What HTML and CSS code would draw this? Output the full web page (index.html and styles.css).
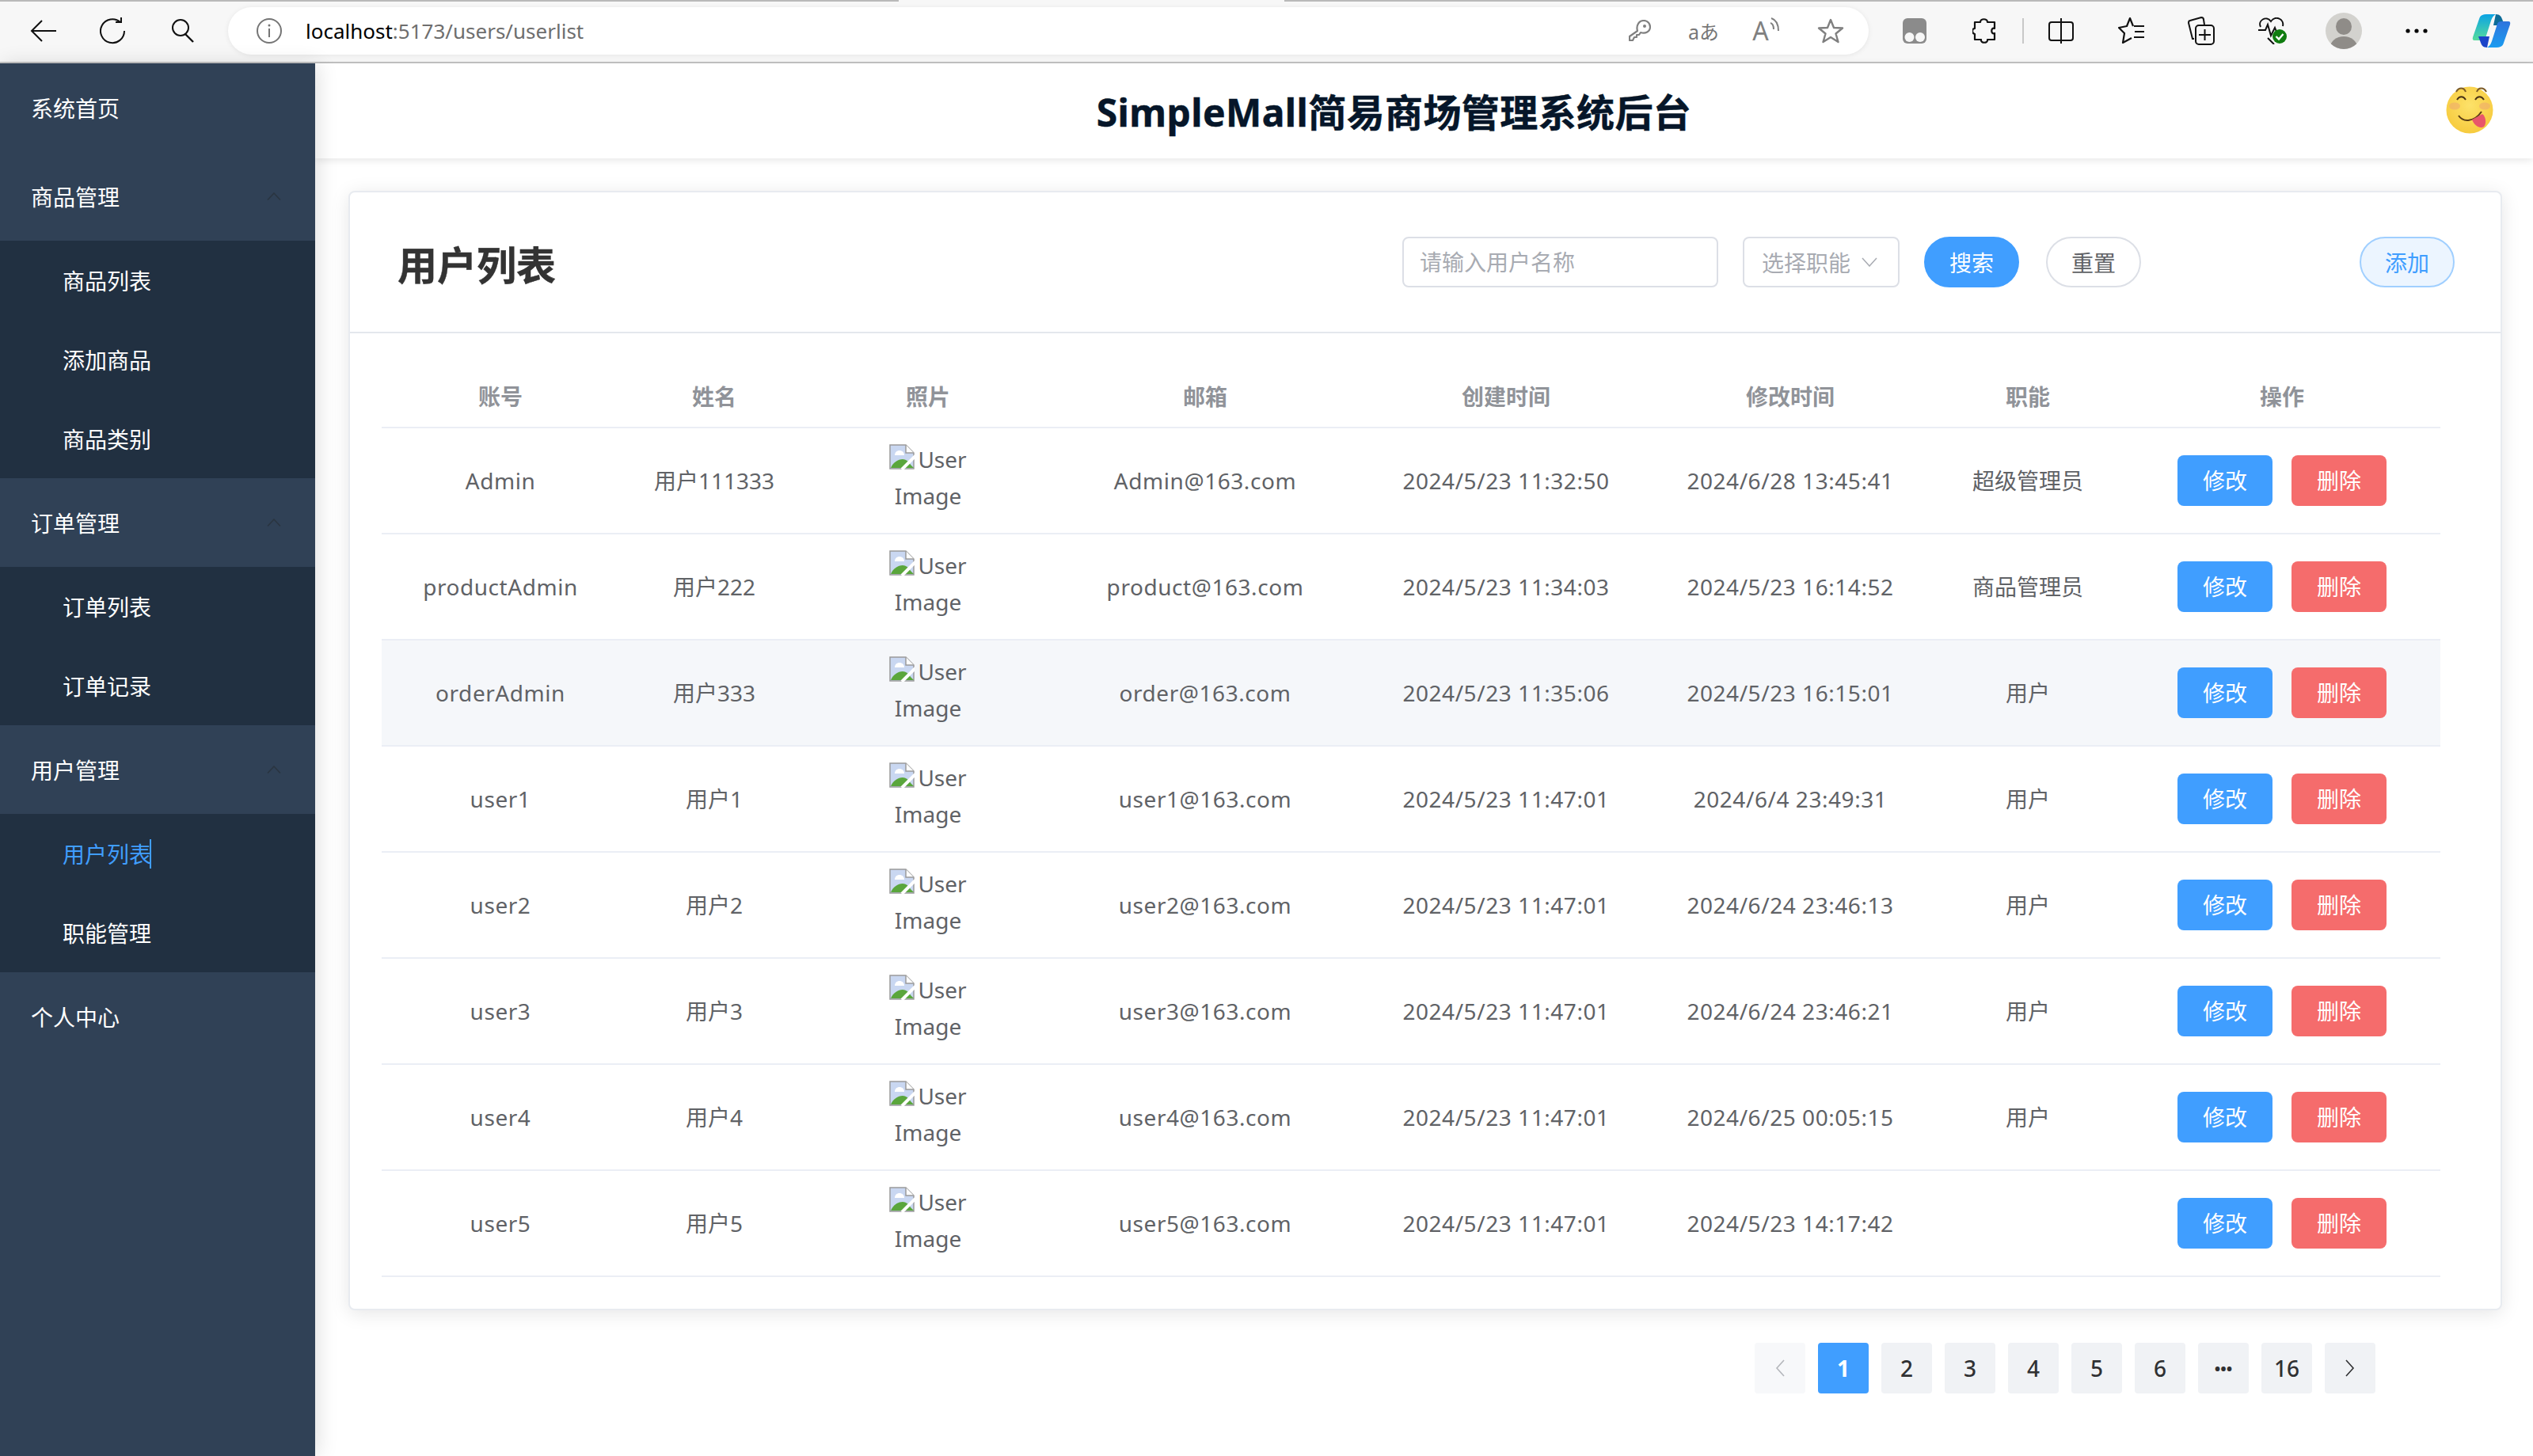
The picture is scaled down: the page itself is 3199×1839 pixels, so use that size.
FILE: index.html
```html
<!DOCTYPE html>
<html lang="zh-CN">
<head>
    <meta charset="UTF-8">
    <title>SimpleMall简易商场管理系统后台</title>
    <link rel="stylesheet" href="styles.css">
</head>
<body>

<svg class="defs" width="0" height="0">
    <symbol id="broken" viewBox="0 0 32 32">
        <path d="M1 1H21L31 11V31H1Z" fill="#c9d7f1" stroke="#9a9a9a" stroke-width="1.5"/>
        <path d="M21 1V11H31" fill="#fff" stroke="#9a9a9a" stroke-width="1.5"/>
        <path d="M7 14C7 10 10 8 13 8C16 8 19 10 19 14Z" fill="#fff"/>
        <path d="M2 30C5 23 11 19 17 19C21 19 25 22 27 26L31 30Z" fill="#5aa63c"/>
        <path d="M16 32L33 15" stroke="#fff" stroke-width="4"/>
    </symbol>
    <symbol id="up" viewBox="0 0 18 10">
        <path d="M1 9.5L9 1L17 9.5" fill="none" stroke="#2a3541" stroke-width="1.6"/>
    </symbol>
</svg>

<div class="topbar">
    <div class="nav-btns">
        <span class="slot"><svg width="34" height="30" viewBox="0 0 34 30"><path d="M33 15H2M15 2L2 15L15 28" fill="none" stroke="#111" stroke-width="2"/></svg></span>
        <span class="slot"><svg width="34" height="34" viewBox="0 0 34 34"><path d="M26 6A15 15 0 1 0 31 17" fill="none" stroke="#111" stroke-width="2"/><path d="M20 6H27V0" fill="none" stroke="#111" stroke-width="2"/></svg></span>
        <span class="slot"><svg width="32" height="30" viewBox="0 0 32 30"><circle cx="13" cy="11" r="10" fill="none" stroke="#111" stroke-width="2"/><path d="M19 19L29 29" stroke="#111" stroke-width="2.4"/></svg></span>
    </div>
    <div class="address">
        <svg class="info" width="32" height="32" viewBox="0 0 32 32"><circle cx="16" cy="16" r="15" fill="none" stroke="#757575" stroke-width="2"/><path d="M16 13V24" stroke="#757575" stroke-width="2"/><circle cx="16" cy="9" r="1.5" fill="#757575"/></svg>
        <span class="url">localhost<span class="url-path">:5173/users/userlist</span></span>
        <div class="addr-tools">
            <svg width="28" height="28" viewBox="0 0 28 28"><path d="M11 14C9 7 13 1 19 1C24 1 27 5 27 9C27 15 21 18 15 16L13 19H10V22H7L5 26H1V21Z" fill="none" stroke="#808080" stroke-width="2.2" stroke-linejoin="round"/><circle cx="20" cy="8" r="2" fill="#808080"/></svg>
            <span class="translate">aあ</span>
            <span class="read-aloud">A<svg width="14" height="22" viewBox="0 0 14 22"><path d="M2 9C5 10 6 13 6 17M3 3C9 5 12 10 12 19" fill="none" stroke="#808080" stroke-width="2"/></svg></span>
            <svg width="34" height="34" viewBox="0 0 34 34"><path d="M17 3L21 13L32 13.500L23.500 20.500L26.500 31L17 25L7.500 31L10.500 20.500L2 13.500L13 13Z" fill="none" stroke="#808080" stroke-width="2.400" stroke-linejoin="round"/></svg>
        </div>
    </div>
    <div class="tools">
        <svg width="30" height="32" viewBox="0 0 30 32"><rect width="30" height="32" rx="6" fill="#8b8b8b"/><circle cx="8.500" cy="24" r="6" fill="#f7f7f7"/><circle cx="22" cy="24" r="6" fill="#f7f7f7"/></svg>
        <svg width="30" height="34" viewBox="0 0 30 34"><path d="M10 6C10 1 19 1 19 6H28V14C23 12 23 22 28 20V28H19C20 33 10 33 11 28H3V21C-1 20 -1 14 3 14V6Z" fill="none" stroke="#111" stroke-width="2.200" stroke-linejoin="round"/></svg>
        <span class="tool-div"></span>
        <svg width="32" height="32" viewBox="0 0 32 32"><rect x="1" y="5" width="30" height="23" rx="3" fill="none" stroke="#111" stroke-width="2"/><path d="M16 0V32" stroke="#111" stroke-width="2"/></svg>
        <svg width="34" height="34" viewBox="0 0 34 34"><path d="M19 11L15 1L11 11L1 13L8 20L6 32L17 26" fill="none" stroke="#111" stroke-width="2.200" stroke-linejoin="round"/><path d="M20 11H33M21 18H33M20 25H33" stroke="#111" stroke-width="2.200"/></svg>
        <svg width="34" height="36" viewBox="0 0 34 36"><path d="M8 28H6L1 8C1 6 2 5 3 5L17 1C19 1 20 2 20 4L21 10" fill="none" stroke="#111" stroke-width="2"/><rect x="10" y="11" width="23" height="24" rx="4" fill="#f7f7f7" stroke="#111" stroke-width="2"/><path d="M21.500 16V30M14 23H29" stroke="#111" stroke-width="2"/></svg>
        <svg width="36" height="34" viewBox="0 0 36 34"><path d="M3 12C-1 4 10 -3 16 5C22 -3 33 2 31 11M12 26L20 34" fill="none" stroke="#111" stroke-width="2"/><path d="M0 16H9L12 9L16 23L21 13L23 18" fill="none" stroke="#111" stroke-width="2"/><circle cx="27" cy="24" r="9" fill="#107c10"/><path d="M22.500 24L26 27.500L31.500 21" fill="none" stroke="#fff" stroke-width="2.400"/></svg>
        <svg width="46" height="46" viewBox="0 0 46 46"><defs><clipPath id="pic"><circle cx="23" cy="23" r="23"/></clipPath></defs><circle cx="23" cy="23" r="23" fill="#d3d2ce"/><ellipse cx="23" cy="17.500" rx="10" ry="10.500" fill="#8f8c88"/><ellipse cx="23" cy="44" rx="17" ry="14" fill="#8f8c88" clip-path="url(#pic)"/></svg>
        <svg width="28" height="6" viewBox="0 0 28 6"><circle cx="3" cy="3" r="2.600"/><circle cx="14" cy="3" r="2.600"/><circle cx="25" cy="3" r="2.600"/></svg>
        <svg width="49" height="42" viewBox="0 0 49 42">
            <defs>
                <linearGradient id="cp1" x1="0" y1="0" x2="0" y2="1"><stop offset="0" stop-color="#0ba3e4"/><stop offset="1" stop-color="#56dd9c"/></linearGradient>
                <linearGradient id="cp2" x1="0" y1="0" x2="0" y2="1"><stop offset="0" stop-color="#1a9cf0"/><stop offset="1" stop-color="#2f74dd"/></linearGradient>
            </defs>
            <path d="M30 0C35 0 37 3 38 6L41 14H27Z" fill="#0d6c98"/>
            <path d="M13 1Q15 0 18 0H30Q26 2 24 8L17 30Q16 33 12 33H3Q0 33 1 29L9 6Q10 2 13 1Z" fill="url(#cp1)"/>
            <g transform="rotate(180 24.500 21)">
                <path d="M30 0C35 0 37 3 38 6L41 14H27Z" fill="#1b44c9"/>
                <path d="M13 1Q15 0 18 0H30Q26 2 24 8L17 30Q16 33 12 33H3Q0 33 1 29L9 6Q10 2 13 1Z" fill="url(#cp2)"/>
            </g>
        </svg>
    </div>
</div>

<div class="app">
    <aside class="sidebar">
        <div class="menu-item">系统首页</div>
        <div class="menu-item">商品管理<svg class="arrow" width="18" height="10"><use href="#up"/></svg></div>
        <div class="submenu">
            <div class="sub-item">商品列表</div>
            <div class="sub-item">添加商品</div>
            <div class="sub-item">商品类别</div>
        </div>
        <div class="menu-item">订单管理<svg class="arrow" width="18" height="10"><use href="#up"/></svg></div>
        <div class="submenu">
            <div class="sub-item">订单列表</div>
            <div class="sub-item">订单记录</div>
        </div>
        <div class="menu-item">用户管理<svg class="arrow" width="18" height="10"><use href="#up"/></svg></div>
        <div class="submenu">
            <div class="sub-item active">用户列表<span class="caret"></span></div>
            <div class="sub-item">职能管理</div>
        </div>
        <div class="menu-item">个人中心</div>
    </aside>

    <main class="main">
        <header class="header">
            <h1 class="site-title">SimpleMall简易商场管理系统后台</h1>
            <svg class="avatar" width="60" height="60" viewBox="0 0 60 60">
                <defs>
                    <radialGradient id="face" cx="0.5" cy="0.4" r="0.65"><stop offset="0" stop-color="#fde26a"/><stop offset="1" stop-color="#f6c93b"/></radialGradient>
                </defs>
                <circle cx="30" cy="30" r="29.500" fill="url(#face)"/>
                <ellipse cx="11" cy="25" rx="7" ry="4.500" fill="#efb06a" opacity="0.7"/>
                <ellipse cx="49" cy="25" rx="7" ry="4.500" fill="#efb06a" opacity="0.7"/>
                <path d="M13 7C16 1 23 1 25 7M39 7C41 1 48 1 51 7" fill="none" stroke="#7b5a26" stroke-width="2"/>
                <path d="M14 17C17 12 22 12 25 17M37 17C40 12 45 12 48 17" fill="none" stroke="#4a3315" stroke-width="2"/>
                <path d="M16 37C22 46 36 45 45 32" fill="none" stroke="#5a3d14" stroke-width="2"/>
                <path d="M33 42L46 35C50 38 52 46 48 51C43 54 36 50 33 42Z" fill="#e8566a"/>
            </svg>
        </header>

        <section class="card">
            <div class="card-head">
                <h2 class="card-title">用户列表</h2>
                <div class="filters">
                    <input class="field name-input" type="text" placeholder="请输入用户名称">
                    <div class="field role-select">选择职能<svg width="20" height="12" viewBox="0 0 20 12"><path d="M1 1L10 11L19 1" fill="none" stroke="#a8abb2" stroke-width="1.500"/></svg></div>
                    <button type="button" class="pill pill-primary">搜索</button>
                    <button type="button" class="pill pill-plain">重置</button>
                </div>
                <button type="button" class="pill pill-light">添加</button>
            </div>

            <div class="card-body">
                <table class="user-table">
                    <colgroup>
                        <col class="c-account"><col class="c-name"><col class="c-photo"><col class="c-mail"><col class="c-created"><col class="c-updated"><col class="c-role"><col class="c-ops">
                    </colgroup>
                    <thead>
                        <tr><th>账号</th><th>姓名</th><th>照片</th><th>邮箱</th><th>创建时间</th><th>修改时间</th><th>职能</th><th>操作</th></tr>
                    </thead>
                    <tbody>
                        <tr>
                            <td>Admin</td><td>用户111333</td>
                            <td><div class="photo"><svg width="32" height="32"><use href="#broken"/></svg>User Image</div></td>
                            <td>Admin@163.com</td><td>2024/5/23 11:32:50</td><td>2024/6/28 13:45:41</td><td>超级管理员</td>
                            <td><div class="ops"><button type="button" class="btn btn-edit">修改</button><button type="button" class="btn btn-del">删除</button></div></td>
                        </tr>
                        <tr>
                            <td>productAdmin</td><td>用户222</td>
                            <td><div class="photo"><svg width="32" height="32"><use href="#broken"/></svg>User Image</div></td>
                            <td>product@163.com</td><td>2024/5/23 11:34:03</td><td>2024/5/23 16:14:52</td><td>商品管理员</td>
                            <td><div class="ops"><button type="button" class="btn btn-edit">修改</button><button type="button" class="btn btn-del">删除</button></div></td>
                        </tr>
                        <tr class="hover">
                            <td>orderAdmin</td><td>用户333</td>
                            <td><div class="photo"><svg width="32" height="32"><use href="#broken"/></svg>User Image</div></td>
                            <td>order@163.com</td><td>2024/5/23 11:35:06</td><td>2024/5/23 16:15:01</td><td>用户</td>
                            <td><div class="ops"><button type="button" class="btn btn-edit">修改</button><button type="button" class="btn btn-del">删除</button></div></td>
                        </tr>
                        <tr>
                            <td>user1</td><td>用户1</td>
                            <td><div class="photo"><svg width="32" height="32"><use href="#broken"/></svg>User Image</div></td>
                            <td>user1@163.com</td><td>2024/5/23 11:47:01</td><td>2024/6/4 23:49:31</td><td>用户</td>
                            <td><div class="ops"><button type="button" class="btn btn-edit">修改</button><button type="button" class="btn btn-del">删除</button></div></td>
                        </tr>
                        <tr>
                            <td>user2</td><td>用户2</td>
                            <td><div class="photo"><svg width="32" height="32"><use href="#broken"/></svg>User Image</div></td>
                            <td>user2@163.com</td><td>2024/5/23 11:47:01</td><td>2024/6/24 23:46:13</td><td>用户</td>
                            <td><div class="ops"><button type="button" class="btn btn-edit">修改</button><button type="button" class="btn btn-del">删除</button></div></td>
                        </tr>
                        <tr>
                            <td>user3</td><td>用户3</td>
                            <td><div class="photo"><svg width="32" height="32"><use href="#broken"/></svg>User Image</div></td>
                            <td>user3@163.com</td><td>2024/5/23 11:47:01</td><td>2024/6/24 23:46:21</td><td>用户</td>
                            <td><div class="ops"><button type="button" class="btn btn-edit">修改</button><button type="button" class="btn btn-del">删除</button></div></td>
                        </tr>
                        <tr>
                            <td>user4</td><td>用户4</td>
                            <td><div class="photo"><svg width="32" height="32"><use href="#broken"/></svg>User Image</div></td>
                            <td>user4@163.com</td><td>2024/5/23 11:47:01</td><td>2024/6/25 00:05:15</td><td>用户</td>
                            <td><div class="ops"><button type="button" class="btn btn-edit">修改</button><button type="button" class="btn btn-del">删除</button></div></td>
                        </tr>
                        <tr>
                            <td>user5</td><td>用户5</td>
                            <td><div class="photo"><svg width="32" height="32"><use href="#broken"/></svg>User Image</div></td>
                            <td>user5@163.com</td><td>2024/5/23 11:47:01</td><td>2024/5/23 14:17:42</td><td></td>
                            <td><div class="ops"><button type="button" class="btn btn-edit">修改</button><button type="button" class="btn btn-del">删除</button></div></td>
                        </tr>
                    </tbody>
                </table>
            </div>
        </section>

        <div class="pager">
            <span class="page disabled"><svg width="12" height="22" viewBox="0 0 12 22"><path d="M11 1L2 11L11 21" fill="none" stroke="#b4b6bb" stroke-width="1.600"/></svg></span>
            <span class="page current">1</span>
            <span class="page">2</span>
            <span class="page">3</span>
            <span class="page">4</span>
            <span class="page">5</span>
            <span class="page">6</span>
            <span class="page dots">•••</span>
            <span class="page">16</span>
            <span class="page"><svg width="12" height="22" viewBox="0 0 12 22"><path d="M1 1L10 11L1 21" fill="none" stroke="#303133" stroke-width="1.600"/></svg></span>
        </div>
    </main>
</div>

</body>
</html>
```

FILE: styles.css
```css
* {
    box-sizing: border-box;
}

html, body {
    margin: 0;
    height: 100%;
}

body {
    width: 3199px;
    height: 1839px;
    overflow: hidden;
    background-color: #fff;
    font-family: "Noto Sans", "Noto Sans CJK SC", sans-serif;
    font-size: 28px;
    color: #606266;
}

.defs {
    display: block;
    height: 0;
}

/* browser chrome */
.topbar {
    display: flex;
    align-items: center;
    height: 80px;
    padding-bottom: 0;
    border-bottom: 2px solid #c4c4c4;
    background: linear-gradient(to right, #b9b9b9 1135px, #f7f7f7 1135px, #f7f7f7 1622px, #b9b9b9 1622px) 0 0 / 100% 2px no-repeat, #f7f7f7;
}

.nav-btns {
    display: flex;
    width: 288px;
    padding-left: 11px;
}

.slot {
    display: flex;
    justify-content: center;
    align-items: center;
    width: 88px;
}

.address {
    display: flex;
    align-items: center;
    width: 2072px;
    height: 60px;
    padding-left: 36px;
    padding-right: 6px;
    border-radius: 30px;
    background-color: #fff;
    box-shadow: 0 1px 6px rgba(0, 0, 0, 0.08);
}

.url {
    margin-left: 30px;
    font-size: 26px;
    color: #000;
}

.url-path {
    color: #6e6e6e;
}

.addr-tools {
    display: grid;
    grid-template-columns: 83px 79px 79px 84px;
    justify-items: center;
    align-items: center;
    margin-left: auto;
}

.translate {
    font-size: 25px;
    color: #777;
}

.read-aloud {
    display: flex;
    font-size: 32px;
    line-height: 38px;
    color: #808080;
}

.tools {
    display: grid;
    grid-template-columns: 80px 96px 2px 94px 84px 92px 88px 92px 92px 96px;
    justify-items: center;
    align-items: center;
    margin-left: 18px;
}

.tool-div {
    width: 2px;
    height: 32px;
    background-color: #c8c8c8;
}

/* layout */
.app {
    display: flex;
    height: 1759px;
}

.sidebar {
    position: relative;
    z-index: 2;
    flex: none;
    width: 398px;
    background-color: #304156;
    box-shadow: 4px 0 24px rgba(0, 0, 0, 0.12);
    color: #fff;
}

.menu-item {
    display: flex;
    align-items: center;
    justify-content: space-between;
    height: 112px;
    padding: 0 43px 0 39px;
}

.submenu {
    background-color: #213041;
}

.sub-item {
    display: flex;
    align-items: center;
    height: 100px;
    padding-left: 79px;
}

.sub-item.active {
    color: #409eff;
}

.caret {
    width: 2px;
    height: 37px;
    margin-left: -2px;
    background-color: #409eff;
}

.main {
    flex: 1;
    min-width: 0;
}

.header {
    display: flex;
    align-items: center;
    height: 120px;
    padding: 0 50px 2px 0;
    box-shadow: 0 2px 10px rgba(0, 0, 0, 0.1);
}

.site-title {
    flex: 1;
    margin: 0;
    padding-left: 34px;
    text-align: center;
    font-size: 48px;
    font-weight: 700;
    letter-spacing: 0.4px;
    -webkit-text-stroke: 0.5px #061629;
    color: #061629;
}

.avatar {
    flex: none;
}

/* card */
.card {
    margin: 41px 39px 0 42px;
    border: 2px solid #e8ebf0;
    border-radius: 8px;
    background-color: #fff;
    box-shadow: 0 4px 24px rgba(0, 0, 0, 0.1);
}

.card-head {
    display: flex;
    align-items: center;
    height: 178px;
    padding: 0 58px 0 60px;
    border-bottom: 2px solid #e4e7ed;
}

.card-title {
    margin: 2px 0 0;
    font-size: 50px;
    font-weight: 700;
    -webkit-text-stroke: 0.4px #333;
    color: #333;
}

.filters {
    display: flex;
    align-items: center;
    margin-left: auto;
    margin-right: 276px;
}

.field {
    height: 64px;
    border: 2px solid #dcdfe6;
    border-radius: 8px;
    background-color: #fff;
    font: inherit;
    color: #a8abb2;
}

.name-input {
    width: 399px;
    padding: 0 20px;
    outline: none;
}

.name-input::placeholder {
    color: #a8abb2;
}

.role-select {
    display: flex;
    align-items: center;
    justify-content: space-between;
    width: 198px;
    margin-left: 31px;
    padding: 0 26px 0 22px;
}

.pill {
    width: 120px;
    height: 64px;
    padding: 0;
    border: 2px solid #dcdfe6;
    border-radius: 32px;
    background-color: #fff;
    font: inherit;
}

.pill-primary {
    margin-left: 31px;
    border-color: #409eff;
    background-color: #409eff;
    color: #fff;
}

.pill-plain {
    margin-left: 34px;
    color: #606266;
}

.pill-light {
    border-color: #a0cfff;
    background-color: #ecf5ff;
    color: #409eff;
}

.card-body {
    padding: 40px 71px 40px 40px;
}

/* table */
.user-table {
    width: 2600px;
    table-layout: fixed;
    border-collapse: separate;
    border-spacing: 0;
    text-align: center;
}

.c-account { width: 300px; }
.c-name { width: 240px; }
.c-photo { width: 300px; }
.c-mail { width: 400px; }
.c-created { width: 360px; }
.c-updated { width: 358px; }
.c-role { width: 242px; }
.c-ops { width: 400px; }

.user-table th {
    height: 80px;
    padding: 0;
    border-bottom: 2px solid #ebeef5;
    font-weight: 700;
    color: #909399;
}

.user-table td {
    height: 134px;
    padding: 20px 0;
    border-bottom: 2px solid #ebeef5;
    line-height: 46px;
}

/* latin columns run a little narrow in Noto Sans */
.user-table td:nth-child(1),
.user-table td:nth-child(4),
.user-table td:nth-child(5),
.user-table td:nth-child(6) {
    letter-spacing: 0.55px;
}

.user-table tr.hover td {
    background-color: #f5f7fa;
}

.photo {
    width: 110px;
    height: 92px;
    margin: -4px auto 4px;
}

.photo svg {
    margin-right: 4px;
    vertical-align: -2px;
}

.ops {
    display: flex;
    justify-content: center;
    gap: 24px;
}

.btn {
    width: 120px;
    height: 64px;
    padding: 0;
    border: none;
    border-radius: 8px;
    font: inherit;
    color: #fff;
}

.btn-edit {
    background-color: #409eff;
}

.btn-del {
    background-color: #f56c6c;
}

/* pagination */
.pager {
    display: flex;
    justify-content: flex-end;
    gap: 16px;
    margin: 41px 199px 0 0;
}

.page {
    display: flex;
    justify-content: center;
    align-items: center;
    width: 64px;
    height: 64px;
    border-radius: 4px;
    background-color: #f0f2f5;
    font-weight: 500;
    color: #303133;
}

.page.disabled {
    background-color: #f7f8fa;
}

.page.current {
    background-color: #409eff;
    font-weight: 700;
    color: #fff;
}

.page.dots {
    font-size: 20px;
    font-weight: 700;
}
```
